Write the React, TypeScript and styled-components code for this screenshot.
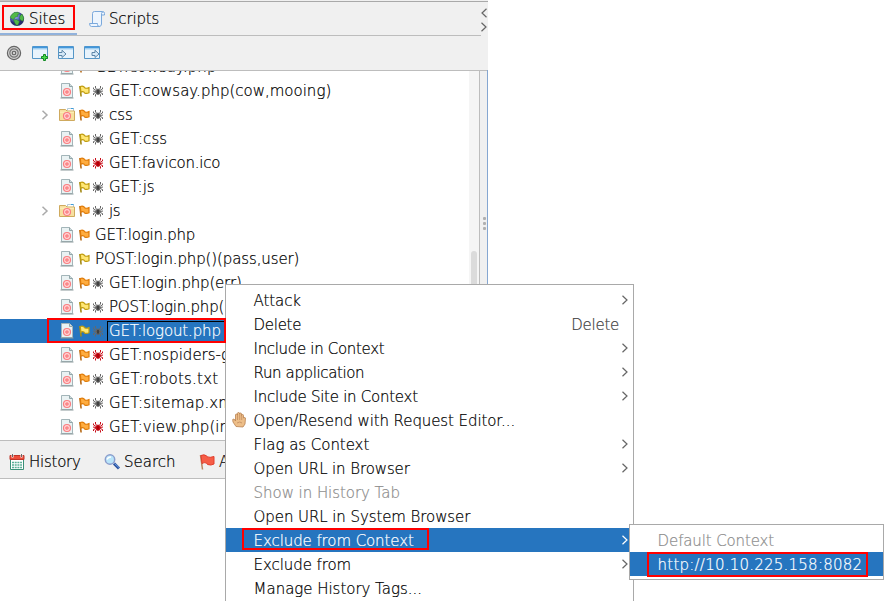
import React from 'react';
import styled, { createGlobalStyle } from 'styled-components';

const Global = createGlobalStyle`
  * { box-sizing: border-box; }
  body { margin: 0; background: #fff; overflow: hidden; }
  svg { display: block; flex: none; }
`;

const Screen = styled.div`
  position: relative;
  width: 884px;
  height: 601px;
  overflow: hidden;
  background: #fff;
  color: #000;
  font: 200 15px/24px "DejaVu Sans", "DejaVu Sans Light", sans-serif;
  -webkit-text-stroke: 0.22px currentColor;
  white-space: nowrap;
`;
const Text = styled.span<{ $ls?: number }>`
  letter-spacing: ${p => p.$ls ?? 0}px;
  padding-top: 1px;
`;
const Workbench = styled.div`
  width: 488px;
  height: 479px;
  display: flex;
  flex-direction: column;
  background: #f0f0f0;
`;
const TopEdge = styled.div`
  height: 2px;
  border-bottom: 1px solid #a9a9a9;
  background: linear-gradient(90deg, #c4c4c4 150px, #f0f0f0 150px);
`;
const TabBar = styled.div`
  height: 34px;
  display: flex;
  border-bottom: 1px solid #bdbdbd;
`;
const Tab = styled.div<{ $active?: boolean; $width: number; $pad: number }>`
  width: ${p => p.$width}px;
  height: 33px;
  padding: 2px 0 0 ${p => p.$pad}px;
  display: flex;
  align-items: center;
  gap: 4px;
  border-bottom: 2px solid ${p => (p.$active ? '#91b2dc' : 'transparent')};
`;
const TabScroll = styled.div`
  margin: 2px 0 0 auto;
  padding-top: 4px;
  width: 7px;
  height: 32px;
  display: flex;
  flex-direction: column;
  gap: 4px;
  background: #f0f0f0;
`;
const ToolBar = styled.div`
  height: 35px;
  display: flex;
  align-items: center;
  gap: 10px;
  padding-left: 6px;
  border-bottom: 1px solid #bdbdbd;
`;
const Body = styled.div`
  height: 370px;
  display: flex;
  border-bottom: 1px solid #bdbdbd;
`;
const Tree = styled.div`
  width: 469px;
  height: 369px;
  overflow: hidden;
  background: #fff;
`;
const Rows = styled.div`
  margin-top: -16px;
`;
const Row = styled.div<{ $selected?: boolean }>`
  height: 24px;
  padding-left: 40px;
  display: flex;
  align-items: center;
  background: ${p => (p.$selected ? '#2675bf' : 'transparent')};
  color: ${p => (p.$selected ? '#fff' : '#000')};
`;
const Slot = styled.div<{ $w: number }>`
  width: ${p => p.$w}px;
  flex: none;
`;
const RowText = styled(Text)<{ $focus?: boolean }>`
  height: 21px;
  line-height: 19px;
  padding: 0 0 0 1px;
  width: ${p => (p.$focus ? '122px' : 'auto')};
  border: 1px solid ${p => (p.$focus ? '#000' : 'transparent')};
`;
const ScrollTrack = styled.div`
  width: 11px;
  padding: 180px 2px 0;
  background: #f5f5f5;
  border-right: 1px solid #bdbdbd;
`;
const Thumb = styled.div`
  width: 6px;
  height: 100px;
  border-radius: 3px;
  background: #dbdbdb;
`;
const Splitter = styled.div`
  width: 8px;
  margin-top: -1px;
  padding: 147px 0 0 3px;
  display: flex;
  flex-direction: column;
  gap: 2px;
  border-right: 1px solid #86a7d1;
`;
const Grip = styled.i`
  width: 3px;
  height: 3px;
  border-radius: 1px;
  background: #b0b0b0;
`;
const BottomTabs = styled.div`
  height: 38px;
  padding: 4px 0 0 9px;
  display: flex;
  border-bottom: 1px solid #bdbdbd;
`;
const BottomTab = styled.div<{ $w: number }>`
  width: ${p => p.$w}px;
  height: 33px;
  display: flex;
  align-items: center;
  gap: 4px;
`;
const Menu = styled.div<{ $x: number; $y: number; $w: number; $h: number }>`
  position: absolute;
  left: ${p => p.$x}px;
  top: ${p => p.$y}px;
  width: ${p => p.$w}px;
  height: ${p => p.$h}px;
  padding-top: 3px;
  border: 1px solid #a9a9a9;
  background: #fff;
`;
const Item = styled.div<{ $active?: boolean; $disabled?: boolean }>`
  height: 24px;
  display: flex;
  align-items: center;
  padding-right: 5px;
  background: ${p => (p.$active ? '#2675bf' : 'transparent')};
  color: ${p => (p.$active ? '#fff' : p.$disabled ? '#8c8c8c' : '#000')};
`;
const Gutter = styled.div`
  width: 27.600px;
  padding-left: 6px;
  flex: none;
`;
const Trail = styled.span<{ $key?: boolean }>`
  margin-left: auto;
  padding-right: ${p => (p.$key ? 9 : 0)}px;
  color: #404040;
  display: flex;
`;
const Mark = styled.div<{ $x: number; $y: number; $w: number; $h: number }>`
  position: absolute;
  left: ${p => p.$x}px;
  top: ${p => p.$y}px;
  width: ${p => p.$w}px;
  height: ${p => p.$h}px;
  border: 2px solid #f00;
  pointer-events: none;
`;

const Chevron = ({ color = '#666', left = false, w = 6, h = 10, sw = 1.2 }) => (
  <svg width={w} height={h} viewBox="0 0 6 10" fill="none" stroke={color} strokeWidth={sw}>
    <path d={left ? 'M5.5 .7 1 5l4.5 4.3' : 'M.5 .7 5 5 .5 9.3'} />
  </svg>
);
const Target = () => (
  <g fill="none" stroke="#fb7d80">
    <circle cx="8" cy="9" r="3.500" fill="#ffd9d9" strokeWidth="1.200" />
    <circle cx="8" cy="9" r="1.200" fill="#ffb0b0" strokeWidth="1.200" />
  </g>
);
const FileIcon = () => (
  <svg width="16" height="16" viewBox="0 0 16 16">
    <path d="M2.5.5h8l3 3v11h-11z" fill="#eaf2f3" stroke="#a3b5b9" />
    <path d="M10.5.5v3h3" fill="#cfdcde" stroke="#91a5a8" />
    <path d="M1.500 15h13" stroke="#8b999b" />
    <Target />
  </svg>
);
const FolderIcon = () => (
  <svg width="16" height="16" viewBox="0 0 16 16">
    <path d="M8.5 3.500V1.500h6V4" fill="#fff" stroke="#b5ccd8" />
    <path d="M12 1.500h2.5" stroke="#3c9ddc" />
    <path d="M.5 13.500v-11h6l1.500 1.500h7.500v9.500z" fill="#f6e0a0" stroke="#cfaa5e" />
    <path d="M1 5.200h14" stroke="#fff1bd" />
    <Target />
  </svg>
);
const FlagIcon = ({ orange = false }) => (
  <svg width="11" height="12" viewBox="0 0 11 12">
    <path d="M.900 1 2.100 11.500" stroke={orange ? '#b66b19' : '#a38a17'} strokeWidth="1.600" />
    <path d="M1.300 1.500q2-1 3.600.2l.7 1.100q2 1 4.400-.2v5.200q-2.400 1.200-4.400.2L4.900 7q-1.500-.7-3 .2z" fill={orange ? '#ffad40' : '#ffe774'} stroke={orange ? '#e07c0a' : '#c09c10'} strokeWidth="1.200" />
  </svg>
);
const SpiderIcon = ({ red = false }) => (
  <svg width="10" height="11" viewBox="0 0 10 11">
    <g stroke={red ? '#c90d18' : '#686868'} fill="none" strokeWidth="1">
      <path d="M2.500 0v2l2 2M7.500 0v2l-2 2M.5 1.500v1.500l3.500 2M9.500 1.500v1.500L6 5M0 5l4 .7M10 5l-4 .7M.5 9V7.500L4 6M9.500 9V7.500L6 6M2.500 10.500V8.500L4.500 7M7.500 10.500V8.500L5.500 7" />
      <ellipse cx="5" cy="5.700" rx="1.700" ry="2.700" fill={red ? '#b00008' : '#404040'} />
    </g>
  </svg>
);
const GlobeIcon = () => (
  <svg width="16" height="16" viewBox="0 0 16 16">
    <defs>
      <radialGradient id="globe" cx=".38" cy=".3"><stop stopColor="#b3bcf8" /><stop offset=".6" stopColor="#5868c4" /><stop offset="1" stopColor="#252c70" /></radialGradient>
    </defs>
    <circle cx="8" cy="8" r="7" fill="url(#globe)" />
    <path d="M2 4.500 5 1.500l4-.3 1.500 1.500-2 1 .5 1.500-3 1-1 2H3.500L1.300 6.500zM4.500 9l3-.5 3 2-1 2.500-1.500 1.800L6 12.500zM11 5l2-2 1.800 4-.8 3-2-.5-1.500-2z" fill="#52b947" stroke="#26742c" strokeWidth=".5" />
  </svg>
);
const ScriptIcon = () => (
  <svg width="16" height="16" viewBox="0 0 16 16" stroke="#7ba9dc" fill="#edf5fe">
    <path d="M3.500 12V2.500q0-2 2-2h8q2 0 2 2V4h-3v9q0 2.500-2.500 2.500H3" />
    <path d="M.5 12.500h8v1q0 2 2 2h-8q-2 0-2-3z" />
    <path d="M12.500 4V2.500q0-1.500 1.500-1.500" fill="none" />
  </svg>
);
const ScopeIcon = () => (
  <svg width="16" height="16" viewBox="0 0 16 16" fill="none">
    <circle cx="8" cy="8" r="6.600" fill="#cfcfcf" stroke="#666" strokeWidth="1.200" />
    <circle cx="8" cy="8" r="4.200" stroke="#777" strokeWidth="1.200" />
    <circle cx="8" cy="8" r="1.800" stroke="#606060" strokeWidth="1.100" />
  </svg>
);
const WindowIcon = ({ kind }: { kind: 'add' | 'in' | 'out' }) => (
  <svg width="16" height="16" viewBox="0 0 16 16">
    <path d="M.5 1.500h15v12H.5z" fill="#e8f3fc" stroke="#5596c7" />
    <path d="M1 2.500h14" stroke="#4296db" strokeWidth="2" />
    <path d="M1 4h14" stroke="#a6d4f3" />
    {kind === 'add' ? (
      <path d="M11.500 9.500h2v2h2v2h-2v2h-2v-2h-2v-2h2z" fill="#4bdc4b" stroke="#128a25" />
    ) : (
      <path d={kind === 'in' ? 'M1 7.500h3V5.200L8 9l-4 3.500V10.500H1' : 'M8 7.500h3V5.200L15 9l-4 3.500V10.500H8z'} fill="#d6e9f8" stroke="#5d86a8" />
    )}
  </svg>
);
const CalendarIcon = () => (
  <svg width="16" height="16" viewBox="0 0 16 16">
    <path d="M1.500 4h13v11.500h-13z" fill="#fff" stroke="#3a9177" />
    <path d="M1 1.500h14v4H1z" fill="#ed4c3b" stroke="#bf3428" />
    <path d="M3.500 0v3.500M12.500 0v3.500" stroke="#fff" strokeWidth="2" />
    <path d="M3.500 0v3M12.500 0v3" stroke="#666" />
    <path d="M3 8.500h10M3 11h10M3 13.500h10" stroke="#59ae96" strokeWidth="1.500" strokeDasharray="2 .7" />
  </svg>
);
const SearchIcon = () => (
  <svg width="16" height="16" viewBox="0 0 16 16">
    <circle cx="6" cy="5.500" r="4.700" fill="#b9e5fa" stroke="#8b9dcc" strokeWidth="1.500" />
    <path d="M3 5.500Q4 3 7 3" fill="none" stroke="#fff" strokeWidth="1.500" />
    <path d="m10 9.500 5 5" stroke="#2d55a1" strokeWidth="3" />
    <path d="m10.500 9.500 4.500 4" stroke="#6f9de0" />
  </svg>
);
const AlertFlag = () => (
  <svg width="16" height="16" viewBox="0 0 16 16">
    <path d="m1.500 1 2 14.500" stroke="#b78360" strokeWidth="1.500" />
    <path d="M2 1.500q3-1.500 5.500.3l.5 1q3 1.200 7-.3v7.500q-3 1.800-6.500.5L7.500 9Q5 8 3 9.500z" fill="#f65d47" stroke="#e13e2c" />
  </svg>
);
const HandIcon = () => (
  <svg width="14" height="16" viewBox="0 0 14 16">
    <path d="M4 14.500 1 10 .7 7.500 2 7l1.500 2V3q0-1 1-1t1 1V1.500q0-1 1-1t1 1V2q0-1 1-1t1 1v1.500q0-1 1-1t1 1V6q2-1 2 0l-.5 6-2 3z" fill="#edbe88" stroke="#b98150" strokeWidth=".8" />
    <path d="M5.500 3v5M7.700 2v6M9.700 3.500V8M5 11q3-2 5 0" stroke="#bd875a" strokeWidth=".7" fill="none" />
  </svg>
);

type Node = { t: string; folder?: boolean; orange?: boolean; spider?: 'grey' | 'red'; sel?: boolean; ls?: number };
const nodes: Node[] = [
  { t: 'GET:cowsay.php', orange: true, ls: 0.08 },
  { t: 'GET:cowsay.php(cow,mooing)', spider: 'grey' },
  { t: 'css', folder: true, orange: true, spider: 'grey' },
  { t: 'GET:css', spider: 'grey', ls: 0.1 },
  { t: 'GET:favicon.ico', orange: true, spider: 'red', ls: -0.22 },
  { t: 'GET:js', spider: 'grey' },
  { t: 'js', folder: true, orange: true, spider: 'grey', ls: -0.4 },
  { t: 'GET:login.php', orange: true, ls: -0.22 },
  { t: 'POST:login.php()(pass,user)', ls: -0.12 },
  { t: 'GET:login.php(err)', orange: true, spider: 'grey', ls: -0.2 },
  { t: 'POST:login.php(', spider: 'grey', ls: -0.2 },
  { t: 'GET:logout.php', spider: 'grey', sel: true, ls: -0.15 },
  { t: 'GET:nospiders-g', orange: true, spider: 'red' },
  { t: 'GET:robots.txt', orange: true, spider: 'grey', ls: 0.2 },
  { t: 'GET:sitemap.xm', orange: true, spider: 'grey', ls: 0.12 },
  { t: 'GET:view.php(in', orange: true, spider: 'red', ls: 0.02 },
];
type Entry = { t: string; sub?: boolean; hot?: string; hand?: boolean; off?: boolean; on?: boolean; ls?: number };
const entries: Entry[] = [
  { t: 'Attack', sub: true, ls: -0.1 },
  { t: 'Delete', hot: 'Delete', ls: -0.3 },
  { t: 'Include in Context', sub: true, ls: -0.33 },
  { t: 'Run application', sub: true, ls: -0.38 },
  { t: 'Include Site in Context', sub: true, ls: -0.26 },
  { t: 'Open/Resend with Request Editor...', hand: true, ls: -0.09 },
  { t: 'Flag as Context', sub: true, ls: -0.04 },
  { t: 'Open URL in Browser', sub: true, ls: -0.1 },
  { t: 'Show in History Tab', off: true, ls: -0.05 },
  { t: 'Open URL in System Browser', ls: -0.08 },
  { t: 'Exclude from Context', sub: true, on: true, ls: -0.09 },
  { t: 'Exclude from', sub: true, ls: -0.08 },
  { t: 'Manage History Tags...', ls: -0.03 },
];

export default function App() {
  return (
    <Screen>
      <Global />
      <Workbench>
        <TopEdge />
        <TabBar>
          <Tab $active $width={77} $pad={9}><GlobeIcon /><Text $ls={-0.1}>Sites</Text></Tab>
          <Tab $width={100} $pad={12}><ScriptIcon /><Text $ls={-0.15}>Scripts</Text></Tab>
          <TabScroll><Chevron left /><Chevron /></TabScroll>
        </TabBar>
        <ToolBar><ScopeIcon /><WindowIcon kind="add" /><WindowIcon kind="in" /><WindowIcon kind="out" /></ToolBar>
        <Body>
          <Tree>
            <Rows>
              {nodes.map(n => (
                <Row key={n.t} $selected={n.sel}>
                  <Slot $w={19}>{n.folder && <Chevron color="#aaa" w={10} sw={1.5} />}</Slot>
                  <Slot $w={20}>{n.folder ? <FolderIcon /> : <FileIcon />}</Slot>
                  <Slot $w={14}><FlagIcon orange={n.orange} /></Slot>
                  {n.spider && <Slot $w={14}><SpiderIcon red={n.spider === 'red'} /></Slot>}
                  <RowText $focus={n.sel} $ls={n.ls}>{n.t}</RowText>
                </Row>
              ))}
            </Rows>
          </Tree>
          <ScrollTrack><Thumb /></ScrollTrack>
          <Splitter><Grip /><Grip /><Grip /></Splitter>
        </Body>
        <BottomTabs>
          <BottomTab $w={95}><CalendarIcon /><Text $ls={-0.25}>History</Text></BottomTab>
          <BottomTab $w={95}><SearchIcon /><Text>Search</Text></BottomTab>
          <BottomTab $w={80}><AlertFlag /><Text>A</Text></BottomTab>
        </BottomTabs>
      </Workbench>
      <Menu $x={225} $y={284} $w={409} $h={330}>
        {entries.map(e => (
          <Item key={e.t} $active={e.on} $disabled={e.off}>
            <Gutter>{e.hand && <HandIcon />}</Gutter>
            <Text $ls={e.ls}>{e.t}</Text>
            {e.hot && <Trail $key><Text $ls={-0.25}>{e.hot}</Text></Trail>}
            {e.sub && <Trail><Chevron color={e.on ? '#fff' : '#666'} /></Trail>}
          </Item>
        ))}
      </Menu>
      <Menu $x={629} $y={524} $w={255} $h={56}>
        <Item $disabled><Gutter /><Text $ls={-0.12}>Default Context</Text></Item>
        <Item $active><Gutter /><Text $ls={0.23}>http://10.10.225.158:8082</Text></Item>
      </Menu>
      <Mark $x={2} $y={5} $w={73} $h={25} />
      <Mark $x={47} $y={318} $w={179} $h={25} />
      <Mark $x={242} $y={528} $w={187} $h={22} />
      <Mark $x={647} $y={552} $w={221} $h={25} />
    </Screen>
  );
}
